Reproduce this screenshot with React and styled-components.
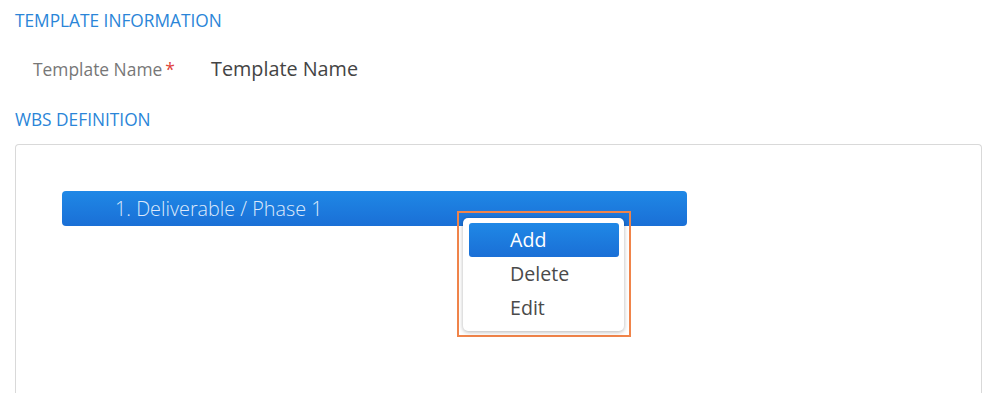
import styled, { createGlobalStyle } from "styled-components"

const Global = createGlobalStyle`
body{
  margin:0;
  background:#fff;
  font-family:"Open Sans", "Noto Sans", sans-serif;
}
`

const Page = styled.div`
padding:0 11px 0 15px;
`

const SectionTitle = styled.div`
color:#2a85d8;
font-size:17.3px;
line-height:22px;
padding-top:${p => p.$top}px;
`

const FieldRow = styled.div`
display:flex;
align-items:baseline;
padding:23px 0 0 18px;
height:35px;
`

const Label = styled.div`
width:178px;
color:#777;
font-size:17.4px;
span{
  color:#e0443c;
  margin-left:3px;
}
`

const Value = styled.div`
color:#444;
font-size:19.8px;
`

const TreeBox = styled.div`
position:relative;
margin-top:13px;
border:1px solid #d9d9d9;
border-bottom:none;
border-radius:4px 4px 0 0;
height:260px;
padding:46px 0 0 46px;
box-sizing:border-box;
`

const Node = styled.div`
width:625px;
height:35px;
border-radius:4px;
background:linear-gradient(#1f88e6, #1a6fd6);
color:#dce9fb;
font-size:19.8px;
font-weight:300;
line-height:35px;
padding-left:53px;
box-sizing:border-box;
`

const Highlight = styled.div`
position:absolute;
left:441px;
top:66px;
width:174px;
height:126px;
border:2px solid #f0844a;
box-sizing:border-box;
padding:5px 5px 4px 4px;
`

const Menu = styled.div`
height:100%;
background:#fff;
border-radius:5px;
box-shadow:0 1px 4px rgba(0,0,0,0.3);
padding:5px 5px 0 6px;
box-sizing:border-box;
`

const Item = styled.div`
height:34px;
line-height:33px;
padding-left:41px;
font-size:19.6px;
border-radius:3px;
color:${p => p.$active ? "#fff" : "#4a4a4a"};
background:${p => p.$active ? "linear-gradient(#1f88e6, #1a6fd6)" : "transparent"};
`

const items = ["Add", "Delete", "Edit"]

const App = () => {
  return (
    <Page>
      <Global />
      <SectionTitle $top={10}>TEMPLATE INFORMATION</SectionTitle>
      <FieldRow>
        <Label>Template Name<span>*</span></Label>
        <Value>Template Name</Value>
      </FieldRow>
      <SectionTitle $top={19}>WBS DEFINITION</SectionTitle>
      <TreeBox>
        <Node>1. Deliverable / Phase 1</Node>
        <Highlight>
          <Menu>
            {items.map((it, i) => (
              <Item key={it} $active={i === 0}>{it}</Item>
            ))}
          </Menu>
        </Highlight>
      </TreeBox>
    </Page>
  )
}

export default App
